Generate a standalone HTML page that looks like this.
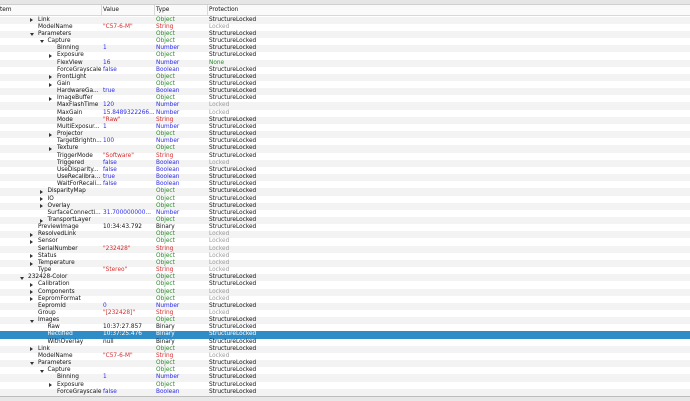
<!DOCTYPE html>
<html><head><meta charset="utf-8"><style>
*{margin:0;padding:0;box-sizing:border-box}
body{width:690px;height:401px;overflow:hidden;background:#fff;font-family:"DejaVu Sans","Liberation Sans",sans-serif;font-size:5.8px;color:#111;position:relative}
.top{position:absolute;left:0;top:0;width:690px;height:5px;background:#e6e6e6;border-bottom:1px solid #cfcfcf}
.hd{position:absolute;left:0;top:5px;width:690px;height:11px;background:#fafafa;border-bottom:1px solid #d8d8d8}
.hd span{position:absolute;top:2px}
.hd i{position:absolute;top:0;width:1px;height:11px;background:#d8d8d8}
.rows{position:absolute;left:0;top:16.6px;width:690px}
.r{position:relative;height:7.16px;line-height:7.16px;white-space:nowrap}
.r:nth-child(odd){background:#f3f3f3}
.r span{position:absolute;top:0}
.v{left:103px}.t{left:156px}.p{left:209px}
.l0{left:28px}.l1{left:38px}.l2{left:47.5px}.l3{left:57px}
.a,.d{position:absolute;width:0;height:0;display:block}
.a{top:1.6px;border-left:3px solid #333;border-top:2px solid transparent;border-bottom:2px solid transparent}
.d{top:2.4px;border-top:3px solid #333;border-left:2px solid transparent;border-right:2px solid transparent}
.a0,.d0{left:20px}.a1,.d1{left:30px}.a2,.d2{left:39.5px}.a3,.d3{left:49px}
.O{color:#2a8a2a}.S{color:#d42a2a}.N{color:#2a2ae8}.L{color:#9a9a9a}.G{color:#2a8a2a}
.sel{background:#308cc6!important;color:#fff}
.sel span{color:#fff!important}
.bot{position:absolute;left:0;top:396px;width:690px;height:5px;background:#e8e8e8;border-top:1px solid #bdbdbd}
</style></head><body>
<div class="top"></div>
<div class="hd"><span style="left:0">tem</span><i style="left:101px"></i><span style="left:103px">Value</span><i style="left:154px"></i><span style="left:156px">Type</span><i style="left:207px"></i><span style="left:209px">Protection</span></div>
<div class="rows">
<div class="r"><b class="a a1"></b><span class="l1">Link</span><span class="t O">Object</span><span class="p">StructureLocked</span></div>
<div class="r"><span class="l1">ModelName</span><span class="v S">"C57-6-M"</span><span class="t S">String</span><span class="p L">Locked</span></div>
<div class="r"><b class="d d1"></b><span class="l1">Parameters</span><span class="t O">Object</span><span class="p">StructureLocked</span></div>
<div class="r"><b class="d d2"></b><span class="l2">Capture</span><span class="t O">Object</span><span class="p">StructureLocked</span></div>
<div class="r"><span class="l3">Binning</span><span class="v N">1</span><span class="t N">Number</span><span class="p">StructureLocked</span></div>
<div class="r"><b class="a a3"></b><span class="l3">Exposure</span><span class="t O">Object</span><span class="p">StructureLocked</span></div>
<div class="r"><span class="l3">FlexView</span><span class="v N">16</span><span class="t N">Number</span><span class="p G">None</span></div>
<div class="r"><span class="l3">ForceGrayscale</span><span class="v N">false</span><span class="t N">Boolean</span><span class="p">StructureLocked</span></div>
<div class="r"><b class="a a3"></b><span class="l3">FrontLight</span><span class="t O">Object</span><span class="p">StructureLocked</span></div>
<div class="r"><b class="a a3"></b><span class="l3">Gain</span><span class="t O">Object</span><span class="p">StructureLocked</span></div>
<div class="r"><span class="l3">HardwareGa...</span><span class="v N">true</span><span class="t N">Boolean</span><span class="p">StructureLocked</span></div>
<div class="r"><b class="a a3"></b><span class="l3">ImageBuffer</span><span class="t O">Object</span><span class="p">StructureLocked</span></div>
<div class="r"><span class="l3">MaxFlashTime</span><span class="v N">120</span><span class="t N">Number</span><span class="p L">Locked</span></div>
<div class="r"><span class="l3">MaxGain</span><span class="v N">15.8489322266...</span><span class="t N">Number</span><span class="p L">Locked</span></div>
<div class="r"><span class="l3">Mode</span><span class="v S">"Raw"</span><span class="t S">String</span><span class="p">StructureLocked</span></div>
<div class="r"><span class="l3">MultiExposur...</span><span class="v N">1</span><span class="t N">Number</span><span class="p">StructureLocked</span></div>
<div class="r"><b class="a a3"></b><span class="l3">Projector</span><span class="t O">Object</span><span class="p">StructureLocked</span></div>
<div class="r"><span class="l3">TargetBrightn...</span><span class="v N">100</span><span class="t N">Number</span><span class="p">StructureLocked</span></div>
<div class="r"><b class="a a3"></b><span class="l3">Texture</span><span class="t O">Object</span><span class="p">StructureLocked</span></div>
<div class="r"><span class="l3">TriggerMode</span><span class="v S">"Software"</span><span class="t S">String</span><span class="p">StructureLocked</span></div>
<div class="r"><span class="l3">Triggered</span><span class="v N">false</span><span class="t N">Boolean</span><span class="p L">Locked</span></div>
<div class="r"><span class="l3">UseDisparity...</span><span class="v N">false</span><span class="t N">Boolean</span><span class="p">StructureLocked</span></div>
<div class="r"><span class="l3">UseRecalibra...</span><span class="v N">true</span><span class="t N">Boolean</span><span class="p">StructureLocked</span></div>
<div class="r"><span class="l3">WaitForRecali...</span><span class="v N">false</span><span class="t N">Boolean</span><span class="p">StructureLocked</span></div>
<div class="r"><b class="a a2"></b><span class="l2">DisparityMap</span><span class="t O">Object</span><span class="p">StructureLocked</span></div>
<div class="r"><b class="a a2"></b><span class="l2">IO</span><span class="t O">Object</span><span class="p">StructureLocked</span></div>
<div class="r"><b class="a a2"></b><span class="l2">Overlay</span><span class="t O">Object</span><span class="p">StructureLocked</span></div>
<div class="r"><span class="l2">SurfaceConnecti...</span><span class="v N">31.700000000...</span><span class="t N">Number</span><span class="p">StructureLocked</span></div>
<div class="r"><b class="a a2"></b><span class="l2">TransportLayer</span><span class="t O">Object</span><span class="p">StructureLocked</span></div>
<div class="r"><span class="l1">PreviewImage</span><span class="v">10:34:43.792</span><span class="t">Binary</span><span class="p">StructureLocked</span></div>
<div class="r"><b class="a a1"></b><span class="l1">ResolvedLink</span><span class="t O">Object</span><span class="p L">Locked</span></div>
<div class="r"><b class="a a1"></b><span class="l1">Sensor</span><span class="t O">Object</span><span class="p L">Locked</span></div>
<div class="r"><span class="l1">SerialNumber</span><span class="v S">"232428"</span><span class="t S">String</span><span class="p L">Locked</span></div>
<div class="r"><b class="a a1"></b><span class="l1">Status</span><span class="t O">Object</span><span class="p L">Locked</span></div>
<div class="r"><b class="a a1"></b><span class="l1">Temperature</span><span class="t O">Object</span><span class="p L">Locked</span></div>
<div class="r"><span class="l1">Type</span><span class="v S">"Stereo"</span><span class="t S">String</span><span class="p L">Locked</span></div>
<div class="r"><b class="d d0"></b><span class="l0">232428-Color</span><span class="t O">Object</span><span class="p">StructureLocked</span></div>
<div class="r"><b class="a a1"></b><span class="l1">Calibration</span><span class="t O">Object</span><span class="p">StructureLocked</span></div>
<div class="r"><b class="a a1"></b><span class="l1">Components</span><span class="t O">Object</span><span class="p L">Locked</span></div>
<div class="r"><b class="a a1"></b><span class="l1">EepromFormat</span><span class="t O">Object</span><span class="p L">Locked</span></div>
<div class="r"><span class="l1">EepromId</span><span class="v N">0</span><span class="t N">Number</span><span class="p">StructureLocked</span></div>
<div class="r"><span class="l1">Group</span><span class="v S">"[232428]"</span><span class="t S">String</span><span class="p L">Locked</span></div>
<div class="r"><b class="d d1"></b><span class="l1">Images</span><span class="t O">Object</span><span class="p">StructureLocked</span></div>
<div class="r"><span class="l2">Raw</span><span class="v">10:37:27.857</span><span class="t">Binary</span><span class="p">StructureLocked</span></div>
<div class="r sel"><span class="l2">Rectified</span><span class="v">10:37:25.476</span><span class="t">Binary</span><span class="p">StructureLocked</span></div>
<div class="r"><span class="l2">WithOverlay</span><span class="v">null</span><span class="t">Binary</span><span class="p">StructureLocked</span></div>
<div class="r"><b class="a a1"></b><span class="l1">Link</span><span class="t O">Object</span><span class="p">StructureLocked</span></div>
<div class="r"><span class="l1">ModelName</span><span class="v S">"C57-6-M"</span><span class="t S">String</span><span class="p L">Locked</span></div>
<div class="r"><b class="d d1"></b><span class="l1">Parameters</span><span class="t O">Object</span><span class="p">StructureLocked</span></div>
<div class="r"><b class="d d2"></b><span class="l2">Capture</span><span class="t O">Object</span><span class="p">StructureLocked</span></div>
<div class="r"><span class="l3">Binning</span><span class="v N">1</span><span class="t N">Number</span><span class="p">StructureLocked</span></div>
<div class="r"><b class="a a3"></b><span class="l3">Exposure</span><span class="t O">Object</span><span class="p">StructureLocked</span></div>
<div class="r"><span class="l3">ForceGrayscale</span><span class="v N">false</span><span class="t N">Boolean</span><span class="p">StructureLocked</span></div>
</div>
<div class="bot"></div>
</body></html>
